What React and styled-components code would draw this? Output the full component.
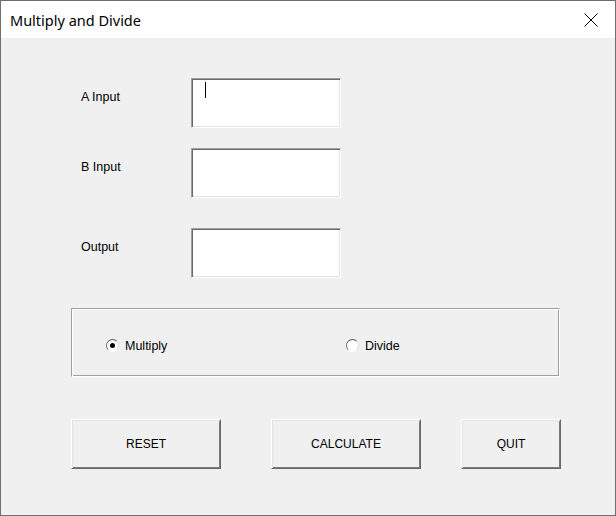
import styled, { createGlobalStyle } from 'styled-components';

const GlobalStyle = createGlobalStyle`
  html, body {
    margin: 0;
    padding: 0;
    background: #f0f0f0;
  }
  * {
    box-sizing: border-box;
  }
`;

const Window = styled.div`
  width: 616px;
  height: 516px;
  border: 1px solid #6f6f6f;
  background: #f0f0f0;
  display: flex;
  flex-direction: column;
  font-family: "Liberation Sans", Arial, sans-serif;
  font-size: 12px;
  color: #000;
  overflow: hidden;
`;

const TitleBar = styled.div`
  height: 37px;
  flex-shrink: 0;
  background: #fff;
  display: flex;
  align-items: center;
  justify-content: space-between;
  padding-left: 9px;

  h1 {
    margin: 0;
    font-family: "Noto Sans", "Open Sans", sans-serif;
    font-weight: 400;
    font-size: 14.5px;
    color: #000;
  }
`;

const CloseButton = styled.div`
  width: 46px;
  height: 37px;
  display: flex;
  align-items: center;
  justify-content: center;
  padding-right: 2px;
`;

const Body = styled.div`
  flex: 1;
  display: flex;
  flex-direction: column;
  padding-top: 40px;
`;

const FieldRow = styled.div`
  display: flex;
  margin-left: 80px;
  margin-top: ${(p) => p.$gap || 0}px;

  label {
    width: 110px;
    padding-top: 12px;
    line-height: 14px;
    font-size: 12.5px;
  }
`;

const TextBox = styled.div`
  width: 150px;
  height: 50px;
  background: #fff;
  border: 1px solid;
  border-color: #a0a0a0 #fff #fff #a0a0a0;
  box-shadow: inset 1px 1px 0 #696969, inset -1px -1px 0 #e3e3e3;
  padding: 3px 0 0 13px;
`;

const Caret = styled.span`
  display: block;
  width: 1px;
  height: 16px;
  background: #000;
`;

const OptionFrame = styled.div`
  margin: 30px 0 0 70px;
  width: 489px;
  height: 69px;
  border: 1px solid;
  border-color: #a0a0a0 #fff #fff #a0a0a0;
  box-shadow: inset 1px 1px 0 #fff, inset -1px -1px 0 #a0a0a0;
  display: flex;
  align-items: center;
  padding: 6px 0 0 34px;
`;

const RadioItem = styled.div`
  display: flex;
  align-items: center;
  gap: 6px;
  width: ${(p) => p.$width || 'auto'};
  font-size: 12.5px;
`;

const RadioCircle = styled.span`
  width: 13px;
  height: 13px;
  border-radius: 50%;
  border: 1px solid;
  border-color: #5a5a5a #d8d8d8 #fdfdfd #6a6a6a;
  background: #fff;
  display: flex;
  align-items: center;
  justify-content: center;

  &::after {
    content: '';
    display: ${(p) => (p.$checked ? 'block' : 'none')};
    width: 5px;
    height: 5px;
    border-radius: 50%;
    background: #000;
  }
`;

const ButtonRow = styled.div`
  display: flex;
  margin: 42px 0 0 70px;
`;

const Button = styled.button`
  width: ${(p) => p.$width || 150}px;
  height: 50px;
  margin-left: ${(p) => p.$gap || 0}px;
  background: #f0f0f0;
  font-family: "Liberation Sans", Arial, sans-serif;
  font-size: 12px;
  color: #000;
  border: 1px solid;
  border-color: #fff #696969 #696969 #fff;
  box-shadow: inset 1px 1px 0 #e3e3e3, inset -1px -1px 0 #7a7a7a;
  padding: 0 0 1px;
`;

function App() {
  return (
    <>
      <GlobalStyle />
      <Window>
        <TitleBar>
          <h1>Multiply and Divide</h1>
          <CloseButton>
            <svg width="14" height="14" viewBox="0 0 14 14">
              <path d="M0.5 0.5 L13.5 13.5 M13.5 0.5 L0.5 13.5" stroke="#000" strokeWidth="1" fill="none" />
            </svg>
          </CloseButton>
        </TitleBar>
        <Body>
          <FieldRow>
            <label>A Input</label>
            <TextBox>
              <Caret />
            </TextBox>
          </FieldRow>
          <FieldRow $gap={20}>
            <label>B Input</label>
            <TextBox />
          </FieldRow>
          <FieldRow $gap={30}>
            <label>Output</label>
            <TextBox />
          </FieldRow>
          <OptionFrame>
            <RadioItem $width="240px">
              <RadioCircle $checked />
              <span>Multiply</span>
            </RadioItem>
            <RadioItem>
              <RadioCircle />
              <span>Divide</span>
            </RadioItem>
          </OptionFrame>
          <ButtonRow>
            <Button>RESET</Button>
            <Button $gap={50}>CALCULATE</Button>
            <Button $gap={40} $width={100}>QUIT</Button>
          </ButtonRow>
        </Body>
      </Window>
    </>
  );
}

export default App;
